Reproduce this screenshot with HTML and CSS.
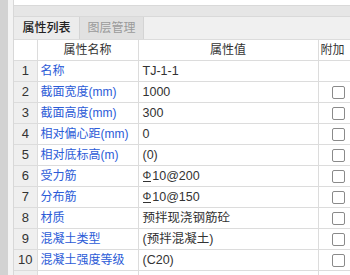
FILE: index.html
```html
<!DOCTYPE html>
<html lang="zh-CN">
<head>
    <meta charset="UTF-8">
    <title>属性列表</title>
    <link rel="stylesheet" href="styles.css">
</head>
<body>
    <div class="side"></div>
    <div class="panel">
        <div class="frame">
            <div class="top-gap"></div>
            <div class="band"></div>
            <div class="tabs">
                <div class="tab active">属性列表</div>
                <div class="tab">图层管理</div>
            </div>
            <table class="props">
                <colgroup>
                    <col class="c-num">
                    <col class="c-name">
                    <col class="c-val">
                    <col class="c-ext">
                </colgroup>
                <thead>
                    <tr>
                        <th class="num"></th>
                        <th>属性名称</th>
                        <th>属性值</th>
                        <th class="ext">附加</th>
                    </tr>
                </thead>
                <tbody>
                    <tr><td class="num">1</td><td class="name">名称</td><td class="val">TJ-1-1</td><td class="ext"></td></tr>
                    <tr><td class="num">2</td><td class="name">截面宽度(mm)</td><td class="val">1000</td><td class="ext"><span class="box"></span></td></tr>
                    <tr><td class="num">3</td><td class="name">截面高度(mm)</td><td class="val">300</td><td class="ext"><span class="box"></span></td></tr>
                    <tr><td class="num">4</td><td class="name">相对偏心距(mm)</td><td class="val">0</td><td class="ext"><span class="box"></span></td></tr>
                    <tr><td class="num">5</td><td class="name">相对底标高(m)</td><td class="val">(0)</td><td class="ext"><span class="box"></span></td></tr>
                    <tr><td class="num">6</td><td class="name">受力筋</td><td class="val"><span class="bar">Φ</span>10@200</td><td class="ext"><span class="box"></span></td></tr>
                    <tr><td class="num">7</td><td class="name">分布筋</td><td class="val"><span class="bar">Φ</span>10@150</td><td class="ext"><span class="box"></span></td></tr>
                    <tr><td class="num">8</td><td class="name">材质</td><td class="val">预拌现浇钢筋砼</td><td class="ext"><span class="box"></span></td></tr>
                    <tr><td class="num">9</td><td class="name">混凝土类型</td><td class="val">(预拌混凝土)</td><td class="ext"><span class="box"></span></td></tr>
                    <tr><td class="num">10</td><td class="name">混凝土强度等级</td><td class="val">(C20)</td><td class="ext"><span class="box"></span></td></tr>
                    <tr><td class="num"></td><td class="name"></td><td class="val"></td><td class="ext"></td></tr>
                </tbody>
            </table>
        </div>
    </div>
</body>
</html>
```

FILE: styles.css
```css
html {
    overflow: hidden;
}
body {
    margin: 0;
    display: flex;
    height: 275px;
    overflow: hidden;
    font-family: "Liberation Sans", "Noto Sans CJK SC", sans-serif;
    font-size: 12px;
    color: #333;
    background: #fff;
}
.side {
    width: 8px;
    flex: none;
    background: #d2d2d2;
}
.panel {
    flex: 1;
    padding-left: 5px;
    background: #f3f3f3;
    min-width: 0;
}
.frame {
    border-left: 1px solid #d8d8d8;
    height: 100%;
    overflow: hidden;
    background: #fff;
}
.top-gap {
    height: 5px;
    background: #fff;
}
.band {
    height: 10px;
    background: #e6e6e6;
    border-top: 1px solid #d9d9d9;
    border-bottom: 1px solid #d9d9d9;
}
.tabs {
    display: flex;
    height: 22px;
    background: #f0f0f0;
}
.tab {
    width: 63px;
    line-height: 22px;
    text-align: center;
    color: #9a9a9a;
    background: #e1e1e1;
    border-right: 1px solid #d4d4d4;
}
.tab.active {
    width: 65px;
    color: #222;
    font-weight: 500;
    background: #ececec;
}
.props {
    border-collapse: collapse;
    table-layout: fixed;
    width: 350px;
}
.c-num { width: 23px; }
.c-name { width: 101px; }
.c-val { width: 180px; }
.c-ext { width: 46px; }
.props th,
.props td {
    height: 20px;
    padding: 0;
    border: 1px solid #dcdcdc;
    white-space: nowrap;
    overflow: hidden;
    font-weight: normal;
    line-height: 20px;
}
.props tr > :first-child {
    border-left: none;
}
.props th {
    color: #333;
    text-align: center;
}
.props th.ext {
    text-align: left;
    padding-left: 2px;
}
.props td.num {
    font-size: 13px;
    text-align: center;
    background: #efefef;
    color: #333;
}
.props td.name {
    color: #2b5bd7;
    padding-left: 3px;
}
.props td.val {
    font-size: 12.5px;
    padding-left: 4px;
    color: #333;
}
.props td.ext {
    padding-left: 13px;
}
.box {
    display: inline-block;
    width: 11px;
    height: 11px;
    border: 1px solid #8a8a8a;
    border-radius: 2px;
    vertical-align: middle;
    background: #fff;
}
.bar {
    display: inline-block;
    font-size: 11px;
    line-height: 11px;
    border-bottom: 1px solid #333;
    margin-right: 1px;
    vertical-align: 1px;
}
```
